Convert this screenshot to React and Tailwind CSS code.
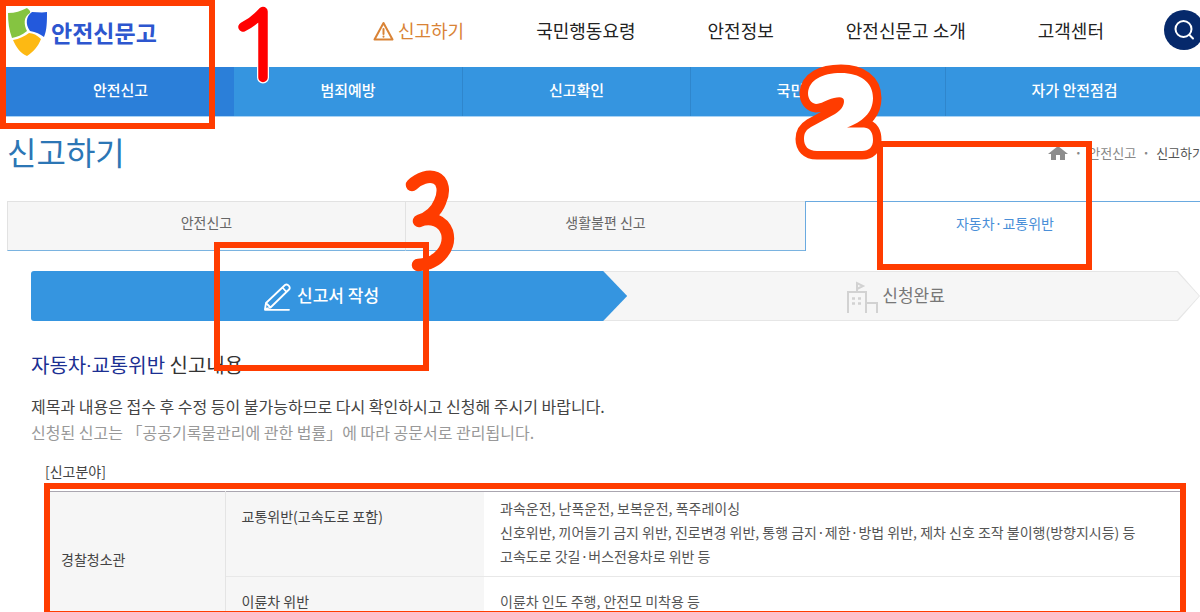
import React from "react";

const MENU = ["국민행동요령", "안전정보", "안전신문고 소개", "고객센터"];
const SUB_MENU = ["범죄예방", "신고확인", "국민행동요령", "자가 안전점검"];

function Logo() {
  return (
    <a href="#" className="-mt-1 flex items-center gap-1 text-[23px] leading-8 font-bold text-[#2d56cf]">
      <svg className="h-12 w-10 shrink-0" viewBox="0 0 40 48" aria-hidden="true">
        <path d="M1 5 C8 5 14 3 20 0 C22 2 24 3 23 5 C16 9 17 17 20 23 C15 27 10 29 5 30 C2 22 1 14 1 5Z" fill="#85c441" />
        <path d="M25 4 C30 4 35 5 40 4 C40 13 40 22 37 29 C33 26 29 24 23 23 C18 16 19 8 25 4Z" fill="#2359dc" />
        <path d="M6 32 C12 31 18 28 22 25 C26 25 30 27 34 31 C31 39 26 44 20 48 C13 45 9 39 6 32Z" fill="#fdb913" />
      </svg>
      안전신문고
    </a>
  );
}

function Header() {
  return (
    <header>
      <div className="flex h-[67px] items-center">
        <Logo />
        <nav className="-mt-2 ml-auto flex shrink-0 items-center gap-[72px] text-lg whitespace-nowrap text-[#222]" aria-label="주 메뉴">
          <a href="#" className="flex items-center gap-1 text-[#d98336]">
            <svg className="mt-1 size-[21px]" viewBox="0 0 21 21" fill="none" stroke="#d98336" strokeWidth="2" strokeLinejoin="round" strokeLinecap="round" aria-hidden="true">
              <path d="M10.5 2 L19.5 18.5 H1.5 Z" />
              <path d="M10.5 8 V13 M10.5 15.6 V15.8" />
            </svg>
            신고하기
          </a>
          {MENU.map((item) => (
            <a href="#" key={item}>{item}</a>
          ))}
        </nav>
        <button type="button" aria-label="검색" className="-mt-2 ml-[60px] flex size-10 shrink-0 items-center justify-center rounded-full bg-[#06296b]">
          <svg className="size-6" viewBox="0 0 24 24" fill="none" stroke="#fff" strokeWidth="2" strokeLinecap="round" aria-hidden="true">
            <circle cx="11.5" cy="11" r="8" />
            <path d="M17.5 17 L21 20.5" />
          </svg>
        </button>
      </div>
    </header>
  );
}

function SubNav() {
  return (
    <nav className="-ml-[7px] grid h-[50px] grid-cols-[234fr_229fr_228fr_255fr_258fr] border-b border-[#a9d3f5] bg-[#3595e0] text-[15px] font-medium text-white" aria-label="하위 메뉴">
      <a href="#" aria-current="page" className="flex items-center justify-center bg-[#2b7fd9] pb-[2px] pl-[7px]">안전신고</a>
      {SUB_MENU.map((item) => (
        <a href="#" key={item} className="flex items-center justify-center border-r border-[#2f86cc] pb-[2px]">{item}</a>
      ))}
    </nav>
  );
}

function Tabs() {
  return (
    <div role="tablist" className="grid h-[50px] grid-cols-3 text-sm text-[#666]">
      <button type="button" role="tab" aria-selected="false" className="border border-b-[#7ab3e0] border-[#e2e2e2] bg-[#f6f6f6] pb-2">안전신고</button>
      <button type="button" role="tab" aria-selected="false" className="border-y border-t-[#e2e2e2] border-b-[#7ab3e0] bg-[#f6f6f6] pb-2">생활불편 신고</button>
      <button type="button" role="tab" aria-selected="true" className="border-t border-l border-[#6aaae0] pb-2 text-[#4a8fd8]">자동차·교통위반</button>
    </div>
  );
}

function Steps() {
  return (
    <ol className="mr-1 ml-6 flex h-[50px] text-[17px]">
      <li aria-current="step" className="z-10 flex w-[51%] items-center justify-center gap-1.5 rounded-l-[3px] bg-[#3595e0] pr-4 pb-[2px] font-medium text-white [clip-path:polygon(0_0,calc(100%-24px)_0,100%_50%,calc(100%-24px)_100%,0_100%)]">
        <svg className="mt-1 size-7" viewBox="0 0 28 28" fill="none" stroke="#fff" strokeWidth="1.8" strokeLinejoin="round" strokeLinecap="round" aria-hidden="true">
          <path d="M2 26 L3 20 L22 2 Q24 0.5 26 3 Q27.500 5 26 6.500 L7.500 24.500 Z M19.500 4.500 L23.500 9 M3 20 L7.500 24.500" />
          <path d="M2 26.800 H26" />
        </svg>
        <span>신고서 작성</span>
      </li>
      <li className="-ml-6 flex flex-1 bg-[#e6e6e6] py-px text-[#777] [clip-path:polygon(0_0,calc(100%-22px)_0,100%_50%,calc(100%-22px)_100%,0_100%)]">
        <div className="flex flex-1 items-center justify-center gap-1 bg-[#f6f6f6] pr-3 pb-[2px] [clip-path:polygon(0_0,calc(100%-23px)_0,calc(100%-1px)_50%,calc(100%-23px)_100%,0_100%)]">
          <svg className="mt-1 size-8" viewBox="0 0 32 32" fill="none" stroke="#d2d2d2" strokeWidth="2" aria-hidden="true">
            <path d="M2 32 V11 H20 V32 M20 22 H31 V32 M11 11 V2 L17 5 L11 8" />
            <path d="M6 17.500 H9 M12 17.500 H15 M6 22.500 H9 M12 22.500 H15" strokeWidth="2.500" />
          </svg>
          <span>신청완료</span>
        </div>
      </li>
    </ol>
  );
}

function ReportTable() {
  return (
    <table className="mt-2 w-full table-fixed border-collapse border-t border-[#aaa6b0] text-left text-sm leading-6 text-[#555]">
      <colgroup>
        <col className="w-[180px]" />
        <col className="w-[259px]" />
        <col />
      </colgroup>
      <tbody>
        <tr>
          <th rowSpan={2} scope="rowgroup" className="border-r border-[#e4e4e4] bg-[#f6f6f6] px-4 font-normal text-[#444]">경찰청소관</th>
          <th scope="row" className="border-b border-[#e8e8e8] bg-[#f6f6f6] px-4 pt-3 align-top font-normal text-[#444]">교통위반(고속도로 포함)</th>
          <td className="border-b border-[#e8e8e8] px-4 pt-1 pb-2">
            과속운전, 난폭운전, 보복운전, 폭주레이싱
            <br />
            신호위반, 끼어들기 금지 위반, 진로변경 위반, 통행 금지·제한·방법 위반, 제차 신호 조작 불이행(방향지시등) 등
            <br />
            고속도로 갓길·버스전용차로 위반 등
          </td>
        </tr>
        <tr>
          <th scope="row" className="bg-[#f6f6f6] px-4 py-3 font-normal text-[#444]">이륜차 위반</th>
          <td className="px-4 py-3">이륜차 인도 주행, 안전모 미착용 등</td>
        </tr>
      </tbody>
    </table>
  );
}

function Markers() {
  return (
    <div className="pointer-events-none absolute inset-0 z-20" aria-hidden="true">
      <div className="absolute top-0 left-0 h-[129px] w-[215px] border-6 border-[#ff3c00]" />
      <div className="absolute top-[141px] left-[877px] h-[129px] w-[215px] border-6 border-[#ff3c00]" />
      <div className="absolute top-[242px] left-[214px] h-[129px] w-[215px] border-6 border-[#ff3c00]" />
      <div className="absolute top-[483px] left-[44px] h-[134px] w-[1142px] border-6 border-[#ff3c00]" />
      <svg className="absolute top-0 left-0 h-[280px] w-[900px]" viewBox="0 0 900 280" fill="none" strokeLinecap="round" strokeLinejoin="round">
        <path d="M243 27 C251 23 258 17 263 11.500 V77.500" stroke="#fff" strokeWidth="12" />
        <path d="M243 27 C251 23 258 17 263 11.500 V77.500" stroke="#f00" strokeWidth="9.500" />
        <path
          d="M808 93 C809 80 822 73 841 73 C860 73 873 82 873 98 C873 113 862 122 847 127.500 H864 C871 128 873 134 873 140 C873 147 869 151 862 151 H817 C808 151 804 146 804 139 C804 133 806 130 811 127 L835 114 C841 110 844 106 844 101 C844 97 840 96.500 834 98 C826 100 821 104 816 104 C811 103 808 99 808 93Z"
          fill="#fff"
          stroke="#ff3c00"
          strokeWidth="17"
          className="[paint-order:stroke]"
        />
        <path d="M412 185 C419 178 429 175 436 178 C443 181 445 191 440 202 C436 212 428 218 419 221 C431 216 443 221 447 232 C451 246 440 264 418 265" stroke="#ff3c00" strokeWidth="12.500" />
      </svg>
    </div>
  );
}

export default function App() {
  return (
    <div className="relative h-screen overflow-hidden bg-white font-['Noto_Sans_CJK_KR','Noto_Sans',sans-serif] text-[#333]">
      <div className="-mr-1 pl-[7px]">
        <Header />
        <SubNav />
        <main>
          <div className="mb-3 flex h-[72px] items-center justify-between">
            <h1 className="pb-1 text-[32px] leading-10 font-normal text-[#2c76b5]">신고하기</h1>
            <nav className="flex items-center text-[13px] text-[#888]" aria-label="현재 위치">
              <a href="#" aria-label="홈">
                <svg className="h-4 w-5" viewBox="0 0 20 16" fill="#8d8d8d" aria-hidden="true">
                  <path d="M10 1 L20 9 H17 V15 H12 V10 H8 V15 H3 V9 H0 Z" />
                </svg>
              </a>
              <span className="w-5 text-center font-bold">·</span>
              <a href="#">안전신고</a>
              <span className="w-5 text-center font-bold">·</span>
              <span className="text-[#555]">신고하기</span>
            </nav>
          </div>
          <Tabs />
          <div className="mt-5">
            <Steps />
          </div>
          <section className="px-6">
            <h2 className="mt-[29px] text-xl leading-[30px] text-[#333]">
              <span className="text-[#1b2f92]">자동차<span className="font-['Roboto']">·</span>교통위반</span> 신고내용
            </h2>
            <p className="mt-3 text-base leading-[26px] text-[#444]">제목과 내용은 접수 후 수정 등이 불가능하므로 다시 확인하시고 신청해 주시기 바랍니다.</p>
            <p className="text-base leading-[26px] text-[#999]">신청된 신고는 「공공기록물관리에 관한 법률」에 따라 공문서로 관리됩니다.</p>
            <div className="pl-3.5">
              <p className="mt-3.5 text-sm leading-6 text-[#444]">[신고분야]</p>
              <ReportTable />
            </div>
          </section>
        </main>
      </div>
      <Markers />
    </div>
  );
}
